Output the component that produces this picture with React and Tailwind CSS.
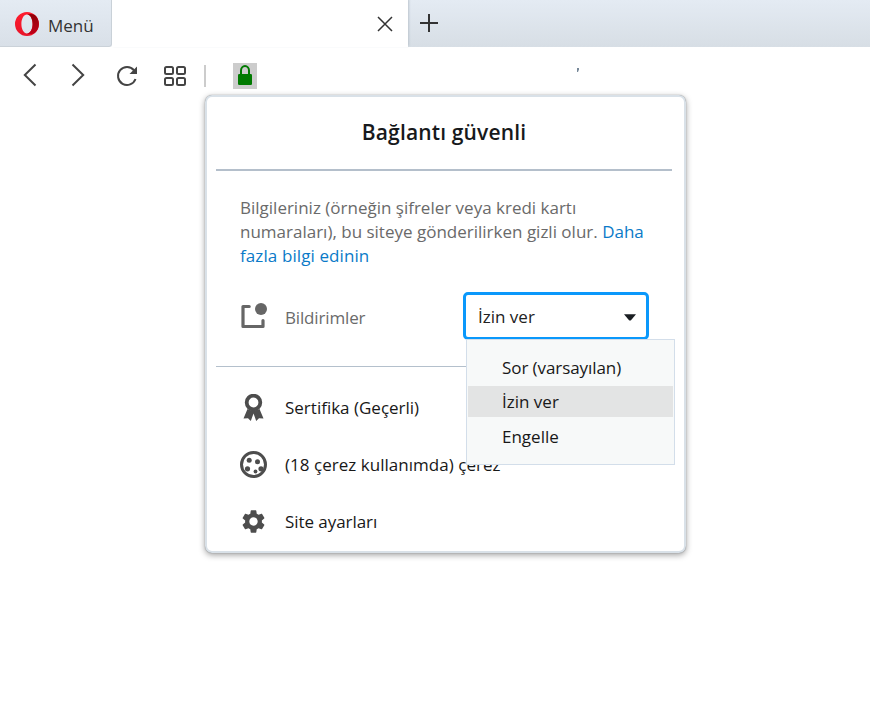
import React from "react";

const ICON = "#4d4d4d";

function OperaLogo() {
  return (
    <svg className="mt-px" width="24" height="24" viewBox="0 0 24 24">
      <defs>
        <linearGradient id="ringLeft" x1="0" y1="0" x2="0" y2="1">
          <stop offset="0" stopColor="#ff1b2d" />
          <stop offset="1" stopColor="#e8152a" />
        </linearGradient>
        <linearGradient id="ringRight" x1="0" y1="0" x2="0" y2="1">
          <stop offset="0" stopColor="#8e0008" />
          <stop offset="1" stopColor="#c00018" />
        </linearGradient>
      </defs>
      <path fillRule="evenodd" fill="url(#ringLeft)" d="M12 0a12 12 0 1 0 0 24a12 12 0 0 0 0-24zM12 2.6c3.2 0 5.6 4.2 5.6 9.4s-2.4 9.4-5.6 9.4s-5.6-4.200-5.600-9.400S8.800 2.600 12 2.600z" />
      <path fill="url(#ringRight)" d="M12 2.600C14 1.600 17.500 1.600 19.800 3A12 12 0 0 1 19.800 21C17.500 22.400 14 22.400 12 21.400c3.200 0 5.600-4.200 5.600-9.400S15.200 2.600 12 2.600z" />
    </svg>
  );
}

function TabBar() {
  return (
    <div className="flex h-[47px] w-full bg-linear-to-b from-[#e4ebf3] to-[#d7dee5]">
      <div className="flex w-[112px] shrink-0 bg-white">
        <div className="flex w-full items-center rounded-br-[3px] border-r border-b border-[#cbd2d9] bg-linear-to-b from-[#e4ebf3] to-[#d9e0e8] pl-[15px]">
          <OperaLogo />
          <span className="ml-[9px] pt-[5px] text-[17px] leading-[22px] text-[#333]">Menü</span>
        </div>
      </div>
      <div className="flex w-[296px] shrink-0 items-center justify-end bg-white pr-[15px] shadow-[1px_-1px_2px_#bcc5cd]">
        <svg width="16" height="16" viewBox="0 0 16 16" stroke="#333" strokeWidth="1.500" fill="none">
          <path d="M1 1l14 14M15 1L1 15" />
        </svg>
      </div>
      <div className="flex flex-1 items-center pb-px pl-[12px]">
        <svg width="18" height="18" viewBox="0 0 18 18" stroke="#333" strokeWidth="2" fill="none">
          <path d="M0 9h18M9 0v18" />
        </svg>
      </div>
    </div>
  );
}

function Toolbar() {
  return (
    <div className="flex h-[48px] items-start pt-[16px] pl-[20px]">
      <svg className="mr-[23px]" width="24" height="26" viewBox="0 0 24 26" fill="none" stroke="#444" strokeWidth="2">
        <path d="M15.500 1.500L4.800 12L15.500 22.500" />
      </svg>
      <svg className="mr-[25px]" width="24" height="26" viewBox="0 0 24 26" fill="none" stroke="#444" strokeWidth="2">
        <path d="M5.500 1.500L16.200 12L5.500 22.500" />
      </svg>
      <svg className="mr-[23px]" width="24" height="26" viewBox="0 0 24 26" fill="none" stroke="#444" strokeWidth="2">
        <path d="M18 7.300A9 9 0 1 0 19.500 16" />
        <path d="M21 3.500v7.500h-7.500z" fill="#444" stroke="none" />
      </svg>
      <svg width="24" height="26" viewBox="0 0 24 26" fill="none" stroke="#444" strokeWidth="2">
        <rect x="2" y="4" width="8" height="7" rx="1.500" />
        <rect x="14" y="4" width="8" height="7" rx="1.500" />
        <rect x="2" y="15" width="8" height="7" rx="1.500" />
        <rect x="14" y="15" width="8" height="7" rx="1.500" />
      </svg>
      <div className="mt-[2px] ml-[17px] h-[22px] w-[2px] bg-[#ccc]" />
      <div className="ml-[27px] flex h-[26px] w-[24px] justify-center bg-[#ccc]">
        <svg width="24" height="26" viewBox="0 0 24 26">
          <path d="M8 12V7.500a4 4.500 0 0 1 8 0V12" fill="none" stroke="#007a00" strokeWidth="2" />
          <rect x="5" y="11" width="14" height="11" rx="1.200" fill="#007a00" />
        </svg>
      </div>
      <svg className="mt-[5px] ml-[320px]" width="2" height="4" viewBox="0 0 2 4">
        <path d="M0 0h2v1.500L1 4H0z" fill="#778899" />
      </svg>
    </div>
  );
}

function NotificationIcon() {
  return (
    <svg width="28" height="28" viewBox="0 -1 28 28">
      <path d="M10.200 3.500H4V23.500h20V17.500" fill="none" stroke="#666" strokeWidth="3.200" strokeLinejoin="round" strokeLinecap="round" />
      <circle cx="22" cy="6" r="6" fill="#666" />
    </svg>
  );
}

function CertificateIcon() {
  return (
    <svg width="28" height="28" viewBox="-0.5 0.5 28 28">
      <circle cx="14" cy="9" r="6.800" fill="none" stroke={ICON} strokeWidth="3.800" />
      <path d="M8 15.500L4 25l4.500-.2L11.300 27.400L14 20l2.700 7.400l2.800-2.600l4.500.2L20 15.500q-6 3-12 0z" fill={ICON} />
    </svg>
  );
}

function CookieIcon() {
  return (
    <svg width="28" height="28" viewBox="-0.5 0.5 28 28" fill={ICON}>
      <circle cx="14" cy="14" r="12" fill="none" stroke={ICON} strokeWidth="3" />
      <circle cx="9.700" cy="9.800" r="2.500" />
      <circle cx="18" cy="11.300" r="2.500" />
      <circle cx="8" cy="18.300" r="2.600" />
      <circle cx="16" cy="21" r="1.900" />
      <circle cx="21.500" cy="18.300" r="2.600" />
    </svg>
  );
}

function GearIcon() {
  return (
    <svg width="28" height="28" viewBox="-0.5 0.5 28 28">
      <path
        transform="scale(1.167)"
        fill={ICON}
        d="M19.140 12.940c.04-.3.06-.61.06-.94 0-.32-.02-.64-.07-.94l2.030-1.580c.18-.14.23-.41.12-.61l-1.920-3.320c-.12-.22-.37-.29-.59-.22l-2.390.96c-.5-.38-1.030-.7-1.620-.94L14.400 2.810c-.04-.24-.24-.41-.48-.41h-3.840c-.24 0-.43.17-.47.41L9.250 5.350C8.660 5.590 8.120 5.920 7.630 6.290L5.240 5.330c-.22-.08-.47 0-.59.22L2.740 8.870c-.12.21-.08.47.12.61l2.030 1.580c-.05.3-.09.63-.09.94s.02.64.07.94l-2.030 1.580c-.18.14-.23.41-.12.61l1.920 3.320c.12.22.37.29.59.22l2.390-.96c.5.38 1.030.7 1.620.94l.36 2.540c.05.24.24.41.48.41h3.840c.24 0 .44-.17.47-.41l.36-2.540c.59-.24 1.130-.56 1.620-.94l2.390.96c.22.08.47 0 .59-.22l1.920-3.320c.12-.22.07-.47-.12-.61l-2.010-1.580zM12 15.600c-1.980 0-3.600-1.620-3.600-3.600s1.620-3.600 3.600-3.600 3.600 1.620 3.600 3.600-1.620 3.600-3.600 3.600z"
      />
    </svg>
  );
}

function PermissionSelect() {
  return (
    <div className="relative ml-auto h-[48px] w-[186px]">
      <div className="flex h-full items-center justify-between rounded-[5px] border-3 border-[#0a98fb] bg-white pr-[10px] pl-[12px]">
        <span className="pt-[2px] text-[17px] text-[#222]">İzin ver</span>
        <svg className="mt-[2px]" width="12" height="7" viewBox="0 0 12 7"><path d="M0 .3h12L7 6.200q-1 .8-2 0z" fill="#1a1e22" /></svg>
      </div>
      <div className="absolute top-[47px] left-[3px] z-10 flex h-[126px] w-[209px] flex-col border border-[#d3deea] bg-[#f7f9f9] pt-[12px] pr-px pl-px text-[17px] leading-[32px] text-[#181818]">
        <div className="h-[34px] pl-[34px]"><span className="tracking-[-0.08px]">Sor (varsayılan)</span></div>
        <div className="h-[31px] bg-[#e3e4e4] pl-[34px]">İzin ver</div>
        <div className="mt-[4px] h-[32px] pl-[34px]">Engelle</div>
      </div>
    </div>
  );
}

function MenuRow({ icon, children }) {
  return (
    <div className="flex h-[57px] items-center pl-[23px] text-[17px] text-[#181818]">
      <div className="w-[46px]">{icon}</div>
      {children}
    </div>
  );
}

function SecurityPopup() {
  return (
    <div className="absolute top-[95px] left-[205px] h-[458px] w-[481px] rounded-[7px] border-2 border-[#d9e1e8] bg-white pr-[12px] pl-[9px] shadow-[0_2px_6px_rgba(0,0,0,0.38),0_0_1px_#888]">
      <h1 className="flex h-[74px] items-center justify-center border-b-2 border-[#b4bfcb] text-[21px] font-semibold tracking-[0.15px] text-[#17191c]">
        Bağlantı güvenli
      </h1>
      <p className="pt-[25px] pl-[24px] text-[17px] leading-[24px] text-[#6a6a6a]">
        <span>Bilgileriniz (örneğin şifreler veya kredi kartı</span>
        <br />
        <span>numaraları), bu siteye gönderilirken gizli olur. </span>
        <a className="text-[#0a7ac8]">Daha</a>
        <br />
        <a className="tracking-[0.1px] text-[#0a7ac8]">fazla bilgi edinin</a>
      </p>
      <div className="mt-[24px] flex h-[48px] items-center pr-[23px] pl-[23px] text-[17px] text-[#6a6a6a]">
        <div className="w-[46px]"><NotificationIcon /></div>
        <span className="pt-[3px] tracking-[-0.15px]">Bildirimler</span>
        <PermissionSelect />
      </div>
      <div className="mt-[26px] mb-[12px] h-px bg-[#b4c0cc]" />
      <MenuRow icon={<CertificateIcon />}><span>Sertifika (Geçerli)</span></MenuRow>
      <MenuRow icon={<CookieIcon />}><span className="tracking-[0.03px]">(18 çerez kullanımda) çerez</span></MenuRow>
      <MenuRow icon={<GearIcon />}><span className="tracking-[-0.06px]">Site ayarları</span></MenuRow>
    </div>
  );
}

export default function App() {
  return (
    <div className="relative h-[725px] w-[870px] overflow-hidden bg-white font-['Open_Sans','Noto_Sans',sans-serif] whitespace-nowrap">
      <TabBar />
      <Toolbar />
      <SecurityPopup />
    </div>
  );
}
